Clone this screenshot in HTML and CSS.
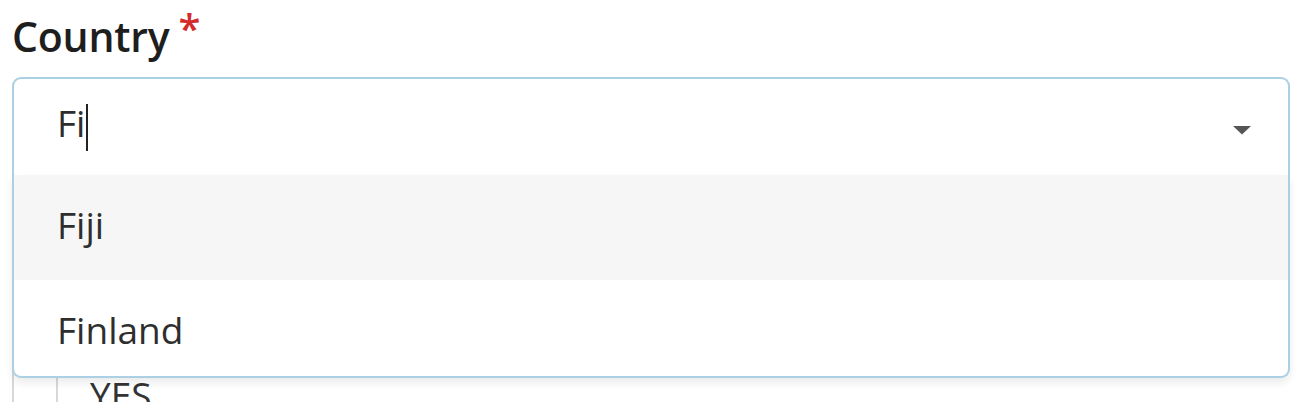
FILE: index.html
```html
<!DOCTYPE html>
<html lang="en">
<head>
<meta charset="utf-8">
<title>Country</title>
<link rel="stylesheet" href="styles.css">
</head>
<body>
<div class="form">
  <div class="label">Country<span class="req">*</span></div>
  <div class="combo">
    <div class="control">
      <span class="value">Fi</span><span class="caret"></span>
      <svg class="arrow" width="20" height="10" viewBox="0 0 20 10"><path d="M1 1 L19 1 L10 9.5 Z" fill="#555"/></svg>
    </div>
    <ul class="menu">
      <li class="option active">Fiji</li>
      <li class="option">Finland</li>
    </ul>
  </div>
  <div class="behind">
    <div class="cell"></div>
    <div class="opt-text">YES</div>
  </div>
</div>
</body>
</html>
```

FILE: styles.css
```css
html, body {
  margin: 0;
  padding: 0;
  background: #ffffff;
  overflow: hidden;
  height: 402px;
}
body {
  font-family: "Open Sans", "Noto Sans", sans-serif;
  color: #333;
}
.form {
  padding: 9px 16px 0 12px;
  height: 393px;
  overflow: hidden;
}
.label {
  font-size: 41px;
  font-weight: 600;
  line-height: 54px;
  height: 54px;
  color: #1e1e1e;
  margin-bottom: 14px;
  letter-spacing: -0.2px;
}
.req {
  color: #d42b2b;
  font-size: 40px;
  line-height: 0;
  position: relative;
  top: -9px;
  margin-left: 9px;
}
.combo {
  position: relative;
}
.control {
  border: 2px solid #abcfe3;
  border-bottom: none;
  border-radius: 9px 9px 0 0;
  box-sizing: content-box;
  display: flex;
  align-items: flex-start;
  padding: 19px 0 0 43px;
  height: 77px;
  font-size: 37px;
  line-height: 50px;
  color: #2e2e2e;
  position: relative;
}
.caret {
  display: inline-block;
  width: 2px;
  height: 47px;
  background: #222;
  margin-left: 1px;
  margin-top: 6px;
}
.arrow {
  position: absolute;
  right: 36px;
  top: 46px;
}
.menu {
  position: absolute;
  left: 0;
  right: 0;
  top: 98px;
  margin: 0;
  padding: 0;
  list-style: none;
  background: #fff;
  border: 2px solid #abcfe3;
  border-top: none;
  border-radius: 0 0 9px 9px;
  box-shadow: 0 5px 8px rgba(0, 0, 0, 0.08);
  z-index: 2;
}
.option {
  font-size: 37px;
  line-height: 50px;
  padding: 25px 0 30px 43px;
  color: #2e2e2e;
}
.option.active {
  background: #f6f6f6;
}
.option:last-child {
  padding-bottom: 21px;
}
.behind {
  display: flex;
  margin-top: 185px;
  height: 80px;
}
.cell {
  width: 42px;
  border-left: 2px solid #d8d8d8;
  border-right: 2px solid #d8d8d8;
}
.opt-text {
  font-size: 37px;
  line-height: 50px;
  padding: 10px 0 0 32px;
  color: #333;
}
```
